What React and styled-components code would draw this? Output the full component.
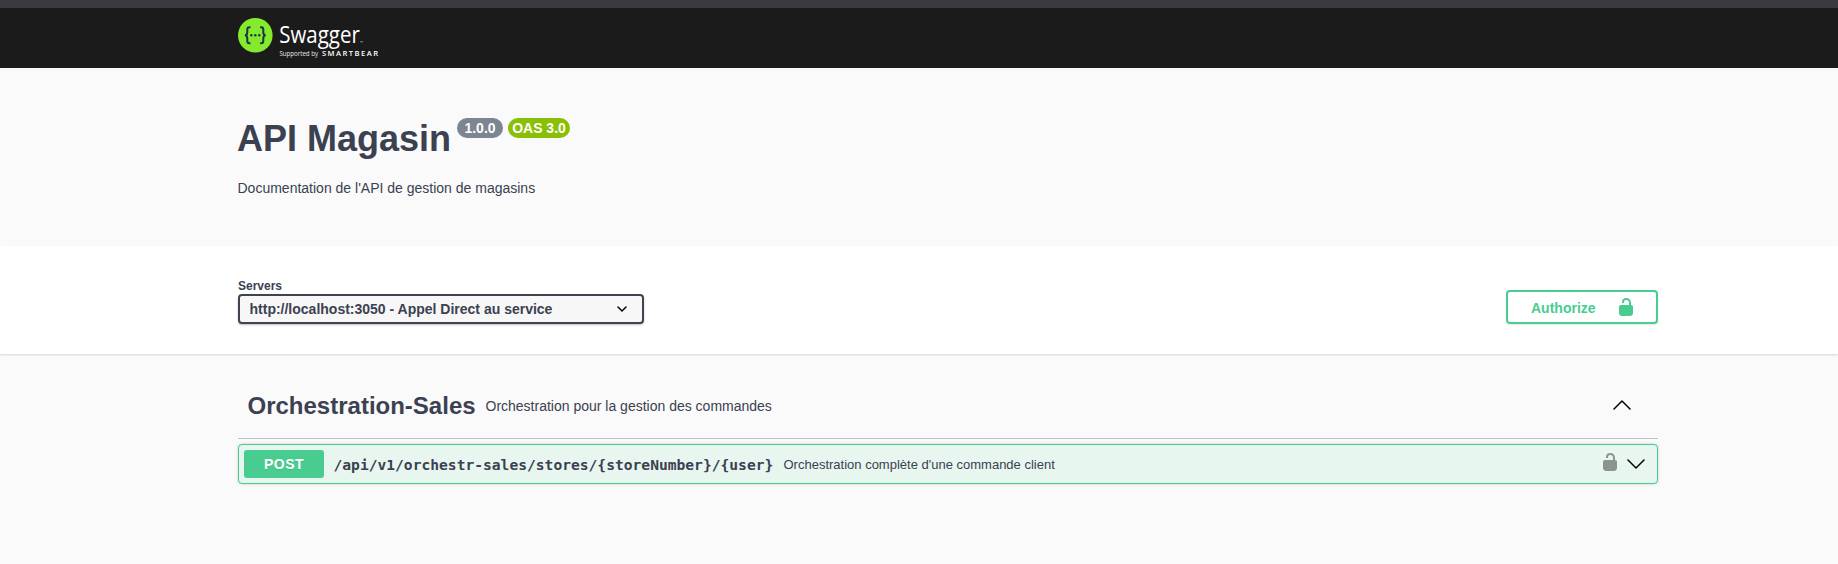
import React from 'react';
import styled, { createGlobalStyle } from 'styled-components';

const GlobalStyle = createGlobalStyle`
  *, *::before, *::after { box-sizing: border-box; }
  body {
    margin: 0;
    background: #fafafa;
    color: #3b4151;
    font-family: "Liberation Sans", Arial, sans-serif;
  }
`;

const Page = styled.div`
  min-height: 564px;
  overflow: hidden;
`;

const Container = styled.div`
  width: 1420px;
  margin-left: 238px;
`;

const Topbar = styled.header`
  height: 68px;
  background: #1b1b1b;
  border-top: 8px solid #3b3a40;
`;

const Logo = styled.svg`
  display: block;
  width: 150px;
  height: 60px;
`;

const Info = styled.section`
  height: 178px;
  padding-top: 49px;
`;

const TitleRow = styled.div`
  display: flex;
  align-items: flex-start;
`;

const Title = styled.h1`
  margin: 1px 0 0 -1px;
  font-size: 36px;
  line-height: 41px;
  font-weight: 700;
  white-space: nowrap;
  width: 220px;
`;

const Badge = styled.span`
  display: flex;
  align-items: center;
  justify-content: center;
  width: ${(p) => p.$width}px;
  height: 20px;
  margin: 1px 5px 0 0;
  border-radius: 57px;
  background: ${(p) => p.$color};
  color: #fff;
  font-size: 14px;
  font-weight: 700;
  white-space: nowrap;
`;

const Description = styled.p`
  margin: 20px 0 0 -0.5px;
  font-size: 14px;
  line-height: 18px;
`;

const SchemeBand = styled.section`
  height: 108px;
  padding-top: 32px;
  background: #fff;
  box-shadow: 0 1px 2px rgba(0, 0, 0, 0.15);
`;

const SchemeRow = styled(Container)`
  display: flex;
  align-items: flex-end;
  justify-content: space-between;
`;

const ServerLabel = styled.label`
  display: flex;
  flex-direction: column;
  font-size: 12px;
  line-height: 16px;
  font-weight: 700;
`;

const ServerSelect = styled.span`
  display: flex;
  align-items: center;
  justify-content: space-between;
  width: 406px;
  height: 30px;
  padding: 0 14px 0 9.5px;
  border: 2px solid #41444e;
  border-radius: 4px;
  background: #f7f7f7;
  box-shadow: 0 1px 2px rgba(0, 0, 0, 0.25);
  font-size: 14px;
`;

const AuthorizeButton = styled.button`
  display: flex;
  align-items: center;
  justify-content: space-between;
  width: 152px;
  height: 34px;
  padding: 1px 23px 0;
  border: 2px solid #49cc90;
  border-radius: 4px;
  background: transparent;
  box-shadow: 0 1px 2px rgba(0, 0, 0, 0.1);
  color: #49cc90;
  font: 700 14px/18px "Liberation Sans", Arial, sans-serif;
`;

const Operations = styled(Container)`
  padding-top: 20px;
`;

const TagHeader = styled.div`
  display: flex;
  align-items: center;
  height: 65px;
  padding: 0 27px 0 9.5px;
  border-bottom: 1px solid rgba(59, 65, 81, 0.3);
`;

const TagName = styled.h3`
  margin: 0;
  font-size: 24px;
  line-height: 28px;
  width: 238px;
  white-space: nowrap;
`;

const TagDescription = styled.small`
  flex: 1;
  font-size: 14px;
`;

const Operation = styled.div`
  display: flex;
  align-items: center;
  height: 40px;
  margin-top: 5px;
  padding: 0 12px 0 5px;
  border: 1px solid #49cc90;
  border-radius: 4px;
  background: #e8f6f0;
  box-shadow: 0 0 3px rgba(0, 0, 0, 0.19);
`;

const Method = styled.span`
  width: 80px;
  height: 28px;
  border-radius: 3px;
  background: #49cc90;
  color: #fff;
  font-size: 14px;
  line-height: 28px;
  font-weight: 700;
  letter-spacing: 0.5px;
  text-align: center;
  text-shadow: 0 1px 0 rgba(0, 0, 0, 0.1);
`;

const Path = styled.span`
  width: 459px;
  padding: 2px 0 0 9.5px;
  font-family: "DejaVu Sans Mono", monospace;
  font-size: 14.62px;
  line-height: 18px;
  font-weight: 700;
  white-space: nowrap;
`;

const Summary = styled.span`
  flex: 1;
  padding: 1px 0 0 0.5px;
  font-size: 13px;
`;

const LockSvg = styled.svg`
  display: block;
  width: 14px;
  height: 18px;
  fill: ${(p) => p.$color};
  margin: ${(p) => p.$margin || '0'};
`;

const Chevron = styled.svg`
  display: block;
  fill: none;
  stroke: #000;
  stroke-linecap: round;
  stroke-linejoin: round;
  margin-bottom: ${(p) => p.$lift || 0}px;
`;

const UnlockIcon = ({ color, margin }) => (
  <LockSvg $color={color} $margin={margin} viewBox="0 0 14 18">
    <path d="M12 7V4.8C12 1.6 9.9 0 7.3 0 4.6 0 3 1.5 3 4v1h2V4.3C5 2.8 5.8 2 7.3 2 9 2 10 3 10 4.800V7H2C.8 7 0 7.8 0 8.800V15c0 1.5.8 2.300 2.500 3h9c1.700-.7 2.500-1.500 2.500-3V8.800C14 7.800 13.200 7 12 7Z" />
  </LockSvg>
);

const ArrowIcon = ({ up }) => (
  <Chevron $lift={up ? 3 : 1} width="18" height="10" viewBox="0 0 18 10" strokeWidth="1.5">
    <path d={up ? 'M1 9 9 1l8 8' : 'M1 1l8 8 8-8'} />
  </Chevron>
);

const SwaggerLogo = () => (
  <Logo viewBox="0 0 150 60" role="img" aria-label="Swagger">
    <circle cx="17.3" cy="27.3" r="17.3" fill="#85ea2d" />
    <g fill="none" stroke="#173647" strokeWidth="2">
      <path d="M12.5 19.3h-1c-1.700 0-2.200.8-2.200 2.300v2.600c0 2-.5 2.900-2.300 3.100 1.800.2 2.300 1.100 2.300 3.100V33c0 1.500.5 2.300 2.200 2.300h1" />
      <path d="M22.1 19.3h1c1.700 0 2.200.8 2.200 2.300v2.600c0 2 .5 2.900 2.300 3.100-1.800.2-2.300 1.100-2.300 3.100V33c0 1.500-.5 2.300-2.200 2.300h-1" />
    </g>
    <g fill="#173647">
      <circle cx="13.3" cy="27.3" r="1.2" />
      <circle cx="17.3" cy="27.3" r="1.2" />
      <circle cx="21.3" cy="27.3" r="1.2" />
    </g>
    <g fill="#fff" fontFamily='"Open Sans", sans-serif'>
      <text x="41.3" y="34.6" fontSize="23" fontWeight="400" textLength="80.5" lengthAdjust="spacingAndGlyphs">Swagger</text>
      <text x="122" y="35.5" fontSize="4" opacity="0.7">™</text>
      <text x="41.5" y="48.3" fontSize="6.2" textLength="38.5" opacity="0.9">Supported by</text>
      <text x="84" y="48" fontSize="7.6" fontWeight="600" textLength="56">SMARTBEAR</text>
    </g>
  </Logo>
);

export default function App() {
  return (
    <Page>
      <GlobalStyle />
      <Topbar>
        <Container>
          <SwaggerLogo />
        </Container>
      </Topbar>
      <Info>
        <Container>
          <TitleRow>
            <Title>API Magasin</Title>
            <Badge $width={46} $color="#7d8492">1.0.0</Badge>
            <Badge $width={62} $color="#89bf04">OAS 3.0</Badge>
          </TitleRow>
          <Description>Documentation de l'API de gestion de magasins</Description>
        </Container>
      </Info>
      <SchemeBand>
        <SchemeRow>
          <ServerLabel>
            Servers
            <ServerSelect>
              http://localhost:3050 - Appel Direct au service
              <Chevron width="12" height="8" viewBox="0 0 12 8" strokeWidth="1.5">
                <path d="m2 2 4 4 4-4" />
              </Chevron>
            </ServerSelect>
          </ServerLabel>
          <AuthorizeButton>
            Authorize
            <UnlockIcon color="#49cc90" margin="0 0 1px 0" />
          </AuthorizeButton>
        </SchemeRow>
      </SchemeBand>
      <Operations>
        <TagHeader>
          <TagName>Orchestration-Sales</TagName>
          <TagDescription>Orchestration pour la gestion des commandes</TagDescription>
          <ArrowIcon up />
        </TagHeader>
        <Operation>
          <Method>POST</Method>
          <Path>/api/v1/orchestr-sales/stores/&#123;storeNumber&#125;/&#123;user&#125;</Path>
          <Summary>Orchestration complète d'une commande client</Summary>
          <UnlockIcon color="#8b958f" margin="0 10px 4px 0" />
          <ArrowIcon />
        </Operation>
      </Operations>
    </Page>
  );
}
